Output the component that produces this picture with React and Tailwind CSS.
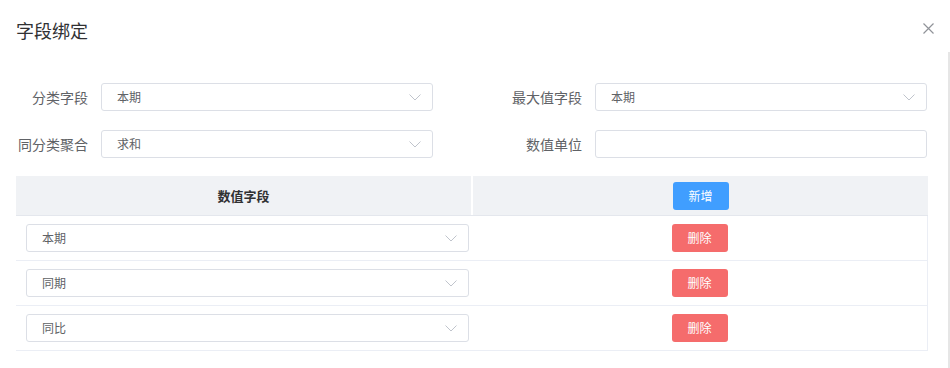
const font = { fontFamily: '"Noto Sans CJK SC", "Noto Sans", sans-serif' }

function Chevron() {
  return (
    <svg width="12" height="7" viewBox="0 0 12 7" className="flex-shrink-0">
      <polyline points="0.5,0.5 6,6 11.5,0.5" fill="none" stroke="#c0c4cc" strokeWidth="1" />
    </svg>
  )
}

function Select({ value, className = '' }) {
  return (
    <div className={`h-7 flex items-center justify-between border border-[#dcdfe6] rounded-[3px] bg-white pl-[15px] pr-[11px] ${className}`}>
      <span className="text-[12px] text-[#606266]">{value}</span>
      <Chevron />
    </div>
  )
}

function FormItem({ label, children }) {
  return (
    <div className="flex items-center">
      <label className="w-[85px] pr-[13px] text-right text-[14px] text-[#606266] whitespace-nowrap">{label}</label>
      {children}
    </div>
  )
}

function Btn({ children, color }) {
  return (
    <button className={`w-[56px] h-7 rounded-[3px] text-white text-[12px] ${color}`}>{children}</button>
  )
}

export default function App() {
  const rows = ['本期', '同期', '同比']
  return (
    <div className="w-[950px] h-[368px] bg-white flex overflow-hidden" style={font}>
      <div className="flex-1 pl-4 pr-5">
        <div className="h-[60px] flex items-center justify-between">
          <h2 className="text-[18px] leading-6 text-[#303133]">字段绑定</h2>
          <svg width="11" height="11" viewBox="0 0 11 11" className="mr-[-6px] mb-[3px]">
            <path d="M0.5 0.5 L10.5 10.5 M10.5 0.5 L0.5 10.5" stroke="#909399" strokeWidth="1.2" />
          </svg>
        </div>

        <div className="pt-[23px] w-[911px] flex flex-col gap-[19px]">
          <div className="flex justify-between">
            <FormItem label="分类字段"><Select value="本期" className="w-[332px]" /></FormItem>
            <FormItem label="最大值字段"><Select value="本期" className="w-[332px]" /></FormItem>
          </div>
          <div className="flex justify-between">
            <FormItem label="同分类聚合"><Select value="求和" className="w-[332px]" /></FormItem>
            <FormItem label="数值单位">
              <div className="w-[332px] h-7 border border-[#dcdfe6] rounded-[3px] bg-white" />
            </FormItem>
          </div>
        </div>

        <div className="mt-[18px] w-[912px]">
          <div className="flex h-[40px] bg-[#f0f2f5] border-b border-[#e4e7ed]">
            <div className="w-[457px] flex items-center justify-center border-r-2 border-white text-[13px] font-bold text-[#303133]">数值字段</div>
            <div className="flex-1 flex items-center justify-center">
              <Btn color="bg-[#409eff]">新增</Btn>
            </div>
          </div>
          {rows.map(r => (
            <div key={r} className="flex h-[45px] border-b border-r border-[#ebeef5]">
              <div className="w-[456px] flex items-center pl-[10px]">
                <Select value={r} className="w-[443px]" />
              </div>
              <div className="flex-1 flex items-center justify-center">
                <Btn color="bg-[#f56c6c]">删除</Btn>
              </div>
            </div>
          ))}
        </div>
      </div>
      <div className="w-[3px] mt-[52px] bg-[#e6e6e6]" />
    </div>
  )
}
